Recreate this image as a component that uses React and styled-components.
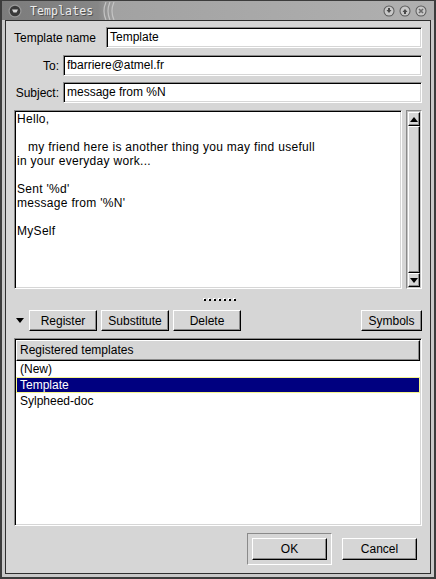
import React from 'react';
import styled, { createGlobalStyle } from 'styled-components';

const GlobalStyle = createGlobalStyle`
  html, body { margin: 0; padding: 0; background: #3a3a3a; }
  body {
    font-family: "Liberation Sans", Arial, sans-serif;
    font-size: 12px;
    color: #000;
  }
`;

const Window = styled.div`
  width: 436px;
  height: 579px;
  box-sizing: border-box;
  border: 2px solid #3c3c3c;
  border-top-width: 1px;
  background: #c8c8c8;
  display: flex;
  flex-direction: column;
`;

const TitleBar = styled.div`
  height: 19px;
  flex: none;
  display: flex;
  align-items: center;
  padding: 0 7px 0 6px;
  background: linear-gradient(to right, #7c7c7c 0, #868686 96px, #a2a2a2 112px, #b0b0b0 100%);
`;

const TitleText = styled.span`
  font-family: "DejaVu Sans Mono", "Liberation Mono", monospace;
  font-size: 11.5px;
  color: #ececec;
  text-shadow: 1px 1px 0 #505050;
  margin-left: 8px;
  letter-spacing: 0.1px;
`;

const Grip = styled.svg`
  margin-left: 9px;
  flex: none;
`;

const TitleButtons = styled.div`
  margin-left: auto;
  display: flex;
  gap: 4px;
`;

const Frame = styled.div`
  flex: 1;
  display: flex;
  padding: 0 3px 3px 3px;
  min-height: 0;
`;

const Body = styled.div`
  flex: 1;
  border: 1px solid #2e2e2e;
  background: #d6d6d6;
  padding: 6px 8px 8px 8px;
  display: flex;
  flex-direction: column;
  min-height: 0;
`;

const NameRow = styled.div`
  display: flex;
  align-items: center;
`;

const Label = styled.span`
  width: ${p => p.$width || 'auto'};
  flex: none;
  text-align: ${p => p.$align || 'left'};
  padding-right: ${p => p.$pad || 0}px;
  box-sizing: border-box;
  white-space: nowrap;
`;

const FieldGrid = styled.div`
  margin-top: 7px;
  display: grid;
  grid-template-columns: 49px 1fr;
  row-gap: 6px;
  align-items: center;
`;

const sunken = `
  border: 1px solid;
  border-color: #8a8a8a #ffffff #ffffff #8a8a8a;
  box-shadow: inset 1px 1px 0 #000000, inset -1px -1px 0 #d6d6d6;
`;

const raised = `
  border: 1px solid;
  border-color: #ffffff #000000 #000000 #ffffff;
  box-shadow: inset -1px -1px 0 #8a8a8a;
  background: #d6d6d6;
`;

const Entry = styled.div`
  flex: 1;
  height: 21px;
  box-sizing: border-box;
  background: #fff;
  ${sunken}
  padding: 0 3px;
  line-height: 19px;
  white-space: nowrap;
  overflow: hidden;
`;

const Editor = styled.div`
  margin-top: 7px;
  height: 179px;
  flex: none;
  display: flex;
  gap: 4px;
`;

const TextView = styled.div`
  flex: 1;
  box-sizing: border-box;
  background: #fff;
  ${sunken}
  padding: 1px 2px;
  line-height: 14px;
  letter-spacing: 0.3px;
  white-space: pre;
  overflow: hidden;
`;

const Scrollbar = styled.div`
  width: 16px;
  box-sizing: border-box;
  ${sunken}
  box-shadow: none;
  background: #c4c4c4;
  padding: 1px;
  display: flex;
  flex-direction: column;
`;

const ArrowButton = styled.div`
  height: 14px;
  flex: none;
  box-sizing: border-box;
  ${raised}
  display: flex;
  align-items: center;
  justify-content: center;
`;

const Slider = styled.div`
  flex: 1;
  box-sizing: border-box;
  ${raised}
`;

const Handle = styled.div`
  height: 21px;
  flex: none;
  display: flex;
  align-items: center;
  justify-content: center;
  padding-left: 4px;
  gap: 3px;
`;

const HandleDot = styled.span`
  width: 2px;
  height: 2px;
  background: #000;
  box-shadow: -1px -1px 0 #fff;
  margin-top: 1px;
`;

const ButtonRow = styled.div`
  height: 21px;
  flex: none;
  display: flex;
  align-items: center;
  gap: 4px;
`;

const Toggle = styled.svg`
  margin: 0 1px 0 2px;
`;

const Button = styled.div`
  width: ${p => p.$width}px;
  height: ${p => p.$height || 21}px;
  box-sizing: border-box;
  ${raised}
  display: flex;
  align-items: center;
  justify-content: center;
  margin-left: ${p => (p.$push ? 'auto' : '0')};
  white-space: nowrap;
`;

const List = styled.div`
  margin-top: 7px;
  flex: 1;
  box-sizing: border-box;
  background: #fff;
  ${sunken}
  padding: 1px 0 0 1px;
  display: flex;
  flex-direction: column;
`;

const ListHeader = styled.div`
  height: 21px;
  flex: none;
  box-sizing: border-box;
  ${raised}
  margin-right: 1px;
  padding-left: 3px;
  line-height: 19px;
`;

const ListRow = styled.div`
  height: 16px;
  flex: none;
  box-sizing: border-box;
  padding-left: 4px;
  line-height: 16px;
  margin-right: 1px;
  background: ${p => (p.$selected ? '#000080' : 'transparent')};
  color: ${p => (p.$selected ? '#fff' : '#000')};
  outline: ${p => (p.$selected ? '1px solid #f4f48a' : 'none')};
  outline-offset: -1px;
`;

const Footer = styled.div`
  margin-top: 7px;
  height: 32px;
  flex: none;
  display: flex;
  align-items: center;
  justify-content: flex-end;
  padding-right: 5px;
  gap: 10px;
`;

const DefaultFrame = styled.div`
  width: 85px;
  height: 32px;
  box-sizing: border-box;
  border: 1px solid;
  border-color: #8a8a8a #ffffff #ffffff #8a8a8a;
  padding: 4px;
  display: flex;
`;

const Circle = ({ kind }) => (
  <svg width="12" height="12" viewBox="0 0 12 12">
    <circle cx="6" cy="6" r="5.5" fill="#5a5a5a" />
    <circle cx="6" cy="6" r="4.5" fill="#c8c8c8" />
    {kind === 'down' && <path d="M3.5 5 L8.5 5 L6 8 Z M5 3 H7 V5 H5 Z" fill="#4a4a4a" />}
    {kind === 'up' && <path d="M3.5 7 L8.5 7 L6 4 Z M5 7 H7 V9 H5 Z" fill="#4a4a4a" />}
    {kind === 'close' && <path d="M4 4 L8 8 M8 4 L4 8" stroke="#6a6a6a" strokeWidth="1.6" />}
  </svg>
);

const MenuIcon = () => (
  <svg width="14" height="14" viewBox="0 0 14 14">
    <circle cx="7" cy="7" r="6.5" fill="#9a9a9a" />
    <circle cx="7" cy="7" r="5.3" fill="#3a3a3a" />
    <path d="M4 5.5 H10 L8.5 8.5 H5.5 Z" fill="#d8d8d8" />
  </svg>
);

const bodyText = `Hello,

   my friend here is another thing you may find usefull
in your everyday work...

Sent '%d'
message from '%N'

MySelf`;

export default function App() {
  return (
    <>
      <GlobalStyle />
      <Window>
        <TitleBar>
          <MenuIcon />
          <TitleText>Templates</TitleText>
          <Grip width="14" height="18" viewBox="0 0 14 18">
            <path d="M4 0 Q0 9 4 18 M8 0 Q4 9 8 18 M12 0 Q8 9 12 18" stroke="#c4c4c4" strokeWidth="1.2" fill="none" />
          </Grip>
          <TitleButtons>
            <Circle kind="down" />
            <Circle kind="up" />
            <Circle kind="close" />
          </TitleButtons>
        </TitleBar>
        <Frame>
          <Body>
            <NameRow>
              <Label $width="92px">Template name</Label>
              <Entry>Template</Entry>
            </NameRow>
            <FieldGrid>
              <Label $align="right" $pad={4}>To:</Label>
              <Entry>fbarriere@atmel.fr</Entry>
              <Label $align="right" $pad={4}>Subject:</Label>
              <Entry>message from %N</Entry>
            </FieldGrid>
            <Editor>
              <TextView>{bodyText}</TextView>
              <Scrollbar>
                <ArrowButton>
                  <svg width="8" height="5" viewBox="0 0 8 5"><path d="M0 5 L4 0 L8 5 Z" fill="#000" /></svg>
                </ArrowButton>
                <Slider />
                <ArrowButton>
                  <svg width="8" height="5" viewBox="0 0 8 5"><path d="M0 0 L4 5 L8 0 Z" fill="#000" /></svg>
                </ArrowButton>
              </Scrollbar>
            </Editor>
            <Handle>
              {Array.from({ length: 7 }).map((_, i) => <HandleDot key={i} />)}
            </Handle>
            <ButtonRow>
              <Toggle width="8" height="5" viewBox="0 0 8 5"><path d="M0 0 L8 0 L4 5 Z" fill="#000" /></Toggle>
              <Button $width={68}>Register</Button>
              <Button $width={68}>Substitute</Button>
              <Button $width={68}>Delete</Button>
              <Button $width={61} $push>Symbols</Button>
            </ButtonRow>
            <List>
              <ListHeader>Registered templates</ListHeader>
              <ListRow>(New)</ListRow>
              <ListRow $selected>Template</ListRow>
              <ListRow>Sylpheed-doc</ListRow>
            </List>
            <Footer>
              <DefaultFrame>
                <Button $width={75} $height={22}>OK</Button>
              </DefaultFrame>
              <Button $width={75} $height={22}>Cancel</Button>
            </Footer>
          </Body>
        </Frame>
      </Window>
    </>
  );
}
